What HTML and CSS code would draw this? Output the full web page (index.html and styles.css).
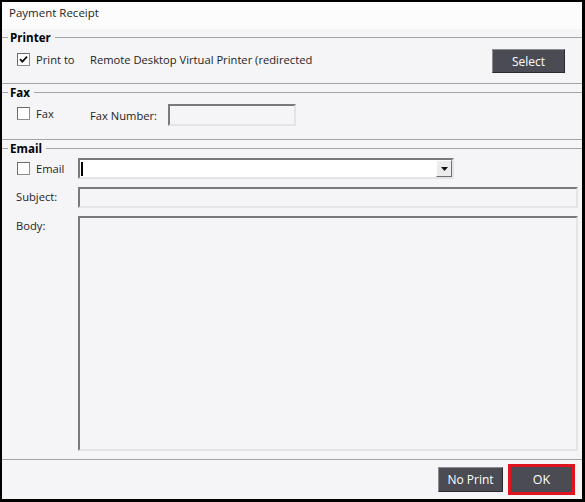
FILE: index.html
```html
<!DOCTYPE html>
<html lang="en">
<head>
  <meta charset="UTF-8" />
  <title>Payment Receipt</title>
  <link rel="stylesheet" href="styles.css">
</head>
<body>
  <div class="window">
    <div class="titlebar">Payment Receipt</div>

    <!-- Printer -->
    <section class="group group-printer">
      <div class="legend">Printer</div>
      <div class="row">
        <label class="check">
          <span class="box">
            <svg width="9" height="9" viewBox="0 0 9 9"><path d="M1 4.2 L3.4 6.6 L8 1.6" fill="none" stroke="#111" stroke-width="1.8"/></svg>
          </span>
          Print to
        </label>
        <span class="printer-name">Remote Desktop Virtual Printer (redirected</span>
        <button class="btn btn-select">Select</button>
      </div>
    </section>

    <!-- Fax -->
    <section class="group group-fax">
      <div class="legend">Fax</div>
      <div class="row">
        <label class="check"><span class="box"></span>Fax</label>
        <span class="field-label">Fax Number:</span>
        <span class="field fax-number"></span>
      </div>
    </section>

    <!-- Email -->
    <section class="group group-email">
      <div class="legend">Email</div>
      <div class="row">
        <label class="check check-email"><span class="box"></span>Email</label>
        <div class="combo">
          <span class="caret"></span>
          <span class="drop">
            <svg width="7" height="4" viewBox="0 0 7 4"><path d="M0 0 H7 L3.5 4 Z" fill="#111"/></svg>
          </span>
        </div>
      </div>
      <div class="row row-field">
        <span class="side-label">Subject:</span>
        <span class="field subject"></span>
      </div>
      <div class="row row-field">
        <span class="side-label">Body:</span>
        <span class="field body-text"></span>
      </div>
    </section>

    <div class="footer">
      <button class="btn btn-noprint">No Print</button>
      <button class="btn btn-ok">OK</button>
    </div>
  </div>
</body>
</html>
```

FILE: styles.css
```css
/* Global styles */
body {
  margin: 0;
  font-family: "Open Sans", "Liberation Sans", sans-serif;
  font-size: 11.2px;
  color: #1e1e1e;
}
.window {
  width: 585px;
  height: 502px;
  box-sizing: border-box;
  border: 2px solid #000;
  border-right-width: 3px;
  border-bottom-width: 3px;
  background-color: #f5f4f7;
  display: flex;
  flex-direction: column;
}
.titlebar {
  height: 27px;
  padding-left: 7px;
  line-height: 22px;
  font-size: 11.5px;
  background-color: #fcfcfd;
}

/* Group boxes */
.group {
  border-bottom: 1px solid #a3a3a3;
}
.legend {
  height: 16px;
  display: flex;
  align-items: center;
  font-weight: bold;
  font-size: 11.6px;
  color: #000;
}
.legend::before,
.legend::after {
  content: "";
  height: 1px;
  background-color: #a3a3a3;
}
.legend::before {
  width: 6px;
  margin-right: 2px;
}
.legend::after {
  flex: 1;
  margin-left: 4px;
}
.row {
  display: flex;
  align-items: center;
  padding-left: 15px;
}

/* Checkbox */
.check {
  width: 73px;
  display: flex;
  align-items: center;
  gap: 6px;
}
.box {
  width: 11px;
  height: 11px;
  border: 1px solid #8e8e8e;
  border-top-color: #6a6a6a;
  border-left-color: #6a6a6a;
  background-color: #fff;
  display: flex;
  align-items: center;
  justify-content: center;
}

/* Printer */
.group-printer .row {
  padding-top: 4px;
  padding-bottom: 10px;
}
.group-printer .check {
  margin-top: -3px;
}
.printer-name {
  flex: 1;
  margin-top: -4px;
}

/* Buttons */
.btn {
  font-family: inherit;
  font-size: 12px;
  color: #fff;
  background-color: #4b4c53;
  border: 1px solid #2a2a2e;
  border-top-color: #8c8c92;
  border-left-color: #8c8c92;
  padding: 0;
  cursor: pointer;
}
.btn-select {
  width: 73px;
  height: 24px;
  margin-right: 17px;
}

/* Fax */
.group-fax .row {
  padding-top: 4px;
  padding-bottom: 13px;
  align-items: flex-start;
}
.group-fax .check {
  margin-top: 2px;
}
.field-label {
  width: 78px;
  margin-top: 4px;
}
.field {
  display: block;
  box-sizing: border-box;
  border: 2px solid #e4e4e6;
  border-top-color: #7a7a7c;
  border-left-color: #7a7a7c;
  background-color: #f5f4f7;
}
.fax-number {
  width: 128px;
  height: 22px;
}

/* Email */
.group-email {
  padding-bottom: 8px;
}
.group-email .row {
  padding-top: 2px;
}
.check-email {
  width: 61px;
  margin-top: -1px;
}
.combo {
  width: 376px;
  height: 21px;
  box-sizing: border-box;
  border: 2px solid #e4e4e6;
  border-top-color: #7a7a7c;
  border-left-color: #7a7a7c;
  background-color: #fff;
  display: flex;
  align-items: center;
  justify-content: space-between;
}
.caret {
  width: 2px;
  height: 14px;
  margin-left: 1px;
  background-color: #000;
}
.drop {
  width: 16px;
  height: 17px;
  box-sizing: border-box;
  border: 1px solid #6e6e70;
  border-top-color: #fff;
  border-left-color: #fff;
  background-color: #ececee;
  display: flex;
  align-items: center;
  justify-content: center;
}
.row-field {
  align-items: flex-start;
  padding-left: 14px;
}
.group-email .row-field {
  padding-top: 8px;
}
.side-label {
  width: 62px;
  margin-top: 2px;
}
.subject {
  width: 500px;
  height: 21px;
}
.body-text {
  width: 500px;
  height: 235px;
}

/* Footer buttons */
.footer {
  flex: 1;
  display: flex;
  justify-content: flex-end;
  align-items: center;
  gap: 5px;
  padding-right: 7px;
}
.btn-noprint {
  width: 65px;
  height: 25px;
}
.btn-ok {
  width: 67px;
  height: 31px;
  border: 3px solid #e0141f;
  font-size: 12.5px;
}
```
